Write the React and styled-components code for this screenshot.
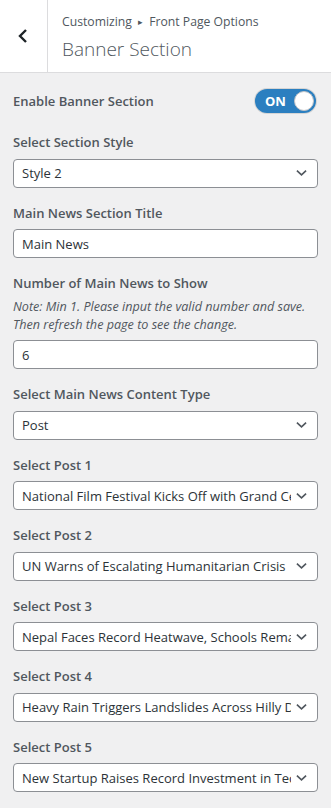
import React from "react";
import styled, { createGlobalStyle } from "styled-components";

const GlobalStyle = createGlobalStyle`
  html, body {
    margin: 0;
    padding: 0;
    background: #f0f0f1;
  }
  body {
    font-family: "Open Sans", "Noto Sans", sans-serif;
    -webkit-font-smoothing: antialiased;
  }
  * { box-sizing: border-box; }
`;

const posts = [
  "National Film Festival Kicks Off with Grand Ceremony",
  "UN Warns of Escalating Humanitarian Crisis",
  "Nepal Faces Record Heatwave, Schools Remain Closed",
  "Heavy Rain Triggers Landslides Across Hilly Districts",
  "New Startup Raises Record Investment in Tech Sector",
];

const App = () => {
  return (
    <>
      <GlobalStyle />
      <Panel>
        <Header>
          <BackButton aria-label="Back">
            <svg width="12" height="16" viewBox="0 0 12 16">
              <path
                d="M9 2 L3 8 L9 14"
                fill="none"
                stroke="#1d2327"
                strokeWidth="2.4"
              />
            </svg>
          </BackButton>
          <HeaderText>
            <Crumb>
              Customizing <Arrow>▸</Arrow> Front Page Options
            </Crumb>
            <Title>Banner Section</Title>
          </HeaderText>
        </Header>

        <Body>
          <ToggleRow>
            <Label>Enable Banner Section</Label>
            <Toggle>
              <span>ON</span>
              <Knob />
            </Toggle>
          </ToggleRow>

          <Field>
            <Label>Select Section Style</Label>
            <SelectBox value="Style 2" />
          </Field>

          <Field>
            <Label>Main News Section Title</Label>
            <Input defaultValue="Main News" />
          </Field>

          <Field>
            <Label>Number of Main News to Show</Label>
            <Note>
              Note: Min 1. Please input the valid number and save. Then refresh
              the page to see the change.
            </Note>
            <Input defaultValue="6" />
          </Field>

          <Field>
            <Label>Select Main News Content Type</Label>
            <SelectBox value="Post" />
          </Field>

          {posts.map((p, i) => (
            <Field key={p}>
              <Label>Select Post {i + 1}</Label>
              <SelectBox value={p} />
            </Field>
          ))}
        </Body>
      </Panel>
    </>
  );
};

const SelectBox = ({ value }) => (
  <SelectWrap>
    <SelectText>{value}</SelectText>
    <Chevron viewBox="0 0 12 8" width="11" height="8">
      <path d="M1 1.5 L6 6 L11 1.5" fill="none" stroke="#50575e" strokeWidth="1.8" />
    </Chevron>
  </SelectWrap>
);

export default App;

const Panel = styled.div`
  width: 331px;
  min-height: 808px;
  background: #f0f0f1;
`;

const Header = styled.div`
  display: flex;
  height: 73px;
  background: #fff;
  border-bottom: 1px solid #dcdcde;
`;

const BackButton = styled.div`
  width: 48px;
  display: flex;
  align-items: center;
  justify-content: center;
  border-right: 1px solid #dcdcde;
  padding-right: 1px;
`;

const HeaderText = styled.div`
  display: flex;
  flex-direction: column;
  padding: 12px 14px;
`;

const Crumb = styled.span`
  font-size: 12.2px;
  line-height: 20px;
  color: #50575e;
`;

const Arrow = styled.span`
  font-size: 9px;
  margin: 0 3px;
  position: relative;
  top: -1px;
`;

const Title = styled.span`
  font-size: 19px;
  line-height: 28px;
  font-weight: 300;
  color: #50575e;
  margin-top: 2px;
`;

const Body = styled.div`
  padding: 16px 13px 12px 13px;
`;

const ToggleRow = styled.div`
  display: flex;
  align-items: center;
  justify-content: space-between;
  height: 24px;
  margin-bottom: 19px;
`;

const Label = styled.div`
  font-size: 13px;
  line-height: 20px;
  font-weight: 600;
  color: #50575e;
  margin-bottom: 6.5px;
  ${ToggleRow} & {
    margin-bottom: 0;
  }
`;

const Toggle = styled.div`
  width: 61px;
  height: 24px;
  border-radius: 12px;
  background: #2b7fc0;
  display: flex;
  align-items: center;
  justify-content: space-between;
  padding: 0 2px 0 10px;
  margin-right: 2px;
  box-shadow: 0 0 0 1px #d5d5d5;
  color: #fff;
  font-weight: 700;
  font-size: 13px;
`;

const Knob = styled.span`
  width: 20px;
  height: 20px;
  border-radius: 50%;
  background: #fff;
  border: 1px solid #c3c4c7;
`;

const Field = styled.div`
  margin-bottom: 15px;
`;

const Note = styled.div`
  font-size: 12.6px;
  line-height: 18px;
  font-style: italic;
  color: #50575e;
  margin: -1.5px 0 6px;
`;

const Input = styled.input`
  display: block;
  width: 100%;
  height: 29px;
  border: 1px solid #8c8f94;
  border-radius: 4px;
  background: #fff;
  padding: 0 8px;
  font-family: inherit;
  font-size: 13px;
  color: #2c3338;
  outline: none;
`;

const SelectWrap = styled.div`
  display: flex;
  align-items: center;
  height: 29px;
  border: 1px solid #8c8f94;
  border-radius: 4px;
  background: #fff;
  padding: 0 10px 0 8px;
`;

const SelectText = styled.span`
  flex: 1;
  overflow: hidden;
  white-space: nowrap;
  font-size: 13px;
  color: #2c3338;
  margin-right: 5px;
`;

const Chevron = styled.svg`
  flex: none;
`;
